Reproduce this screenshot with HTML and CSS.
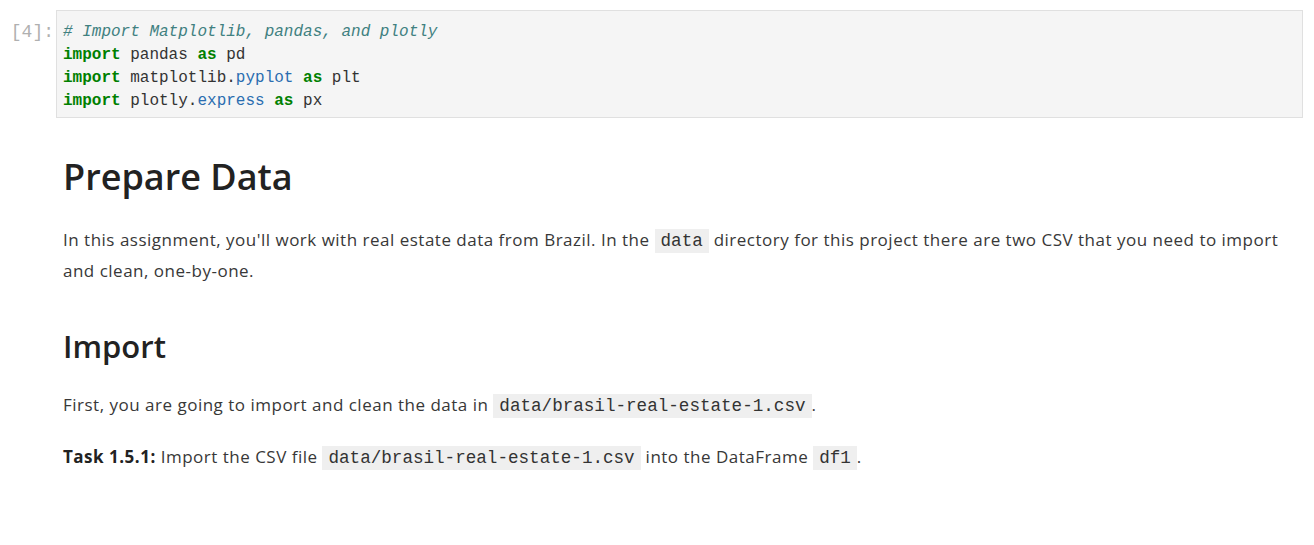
FILE: index.html
```html
<!DOCTYPE html>
<html>
<head>
<meta charset="utf-8">
<link rel="stylesheet" href="styles.css">
</head>
<body>
<div class="notebook">
  <div class="cell code-cell">
    <div class="prompt">[4]:</div>
    <div class="input">
<pre class="code"><span class="cm"># Import Matplotlib, pandas, and plotly</span>
<span class="kw">import</span> pandas <span class="kw">as</span> pd
<span class="kw">import</span> matplotlib.<span class="prop">pyplot</span> <span class="kw">as</span> plt
<span class="kw">import</span> plotly.<span class="prop">express</span> <span class="kw">as</span> px</pre>
    </div>
  </div>
  <div class="cell md-cell">
    <div class="prompt"></div>
    <div class="md">
      <h1>Prepare Data</h1>
      <p class="intro">In this assignment, you'll work with real estate data from Brazil. In the <code>data</code> directory for this project there are two CSV that you need to import and clean, one-by-one.</p>
      <h2>Import</h2>
      <p>First, you are going to import and clean the data in <code>data/brasil-real-estate-1.csv</code>.</p>
      <p><strong>Task 1.5.1:</strong> Import the CSV file <code>data/brasil-real-estate-1.csv</code> into the DataFrame <code>df1</code>.</p>
    </div>
  </div>
</div>
</body>
</html>
```
FILE: styles.css
```css
html, body {
  margin: 0;
  padding: 0;
  background: #ffffff;
}
.notebook {
  padding: 10px 11px 0 0;
}
.cell {
  display: flex;
}
.prompt {
  width: 56px;
  flex: none;
  box-sizing: border-box;
  padding-top: 11px;
  padding-right: 2px;
  text-align: right;
  font-family: "Liberation Mono", monospace;
  font-size: 18px;
  line-height: 23px;
  color: #b0b0b0;
}
.input {
  flex: 1;
  background: #f5f5f5;
  border: 1px solid #e0e0e0;
  box-sizing: border-box;
}
.code {
  margin: 0;
  padding: 10px 6px 4px 6px;
  font-family: "Liberation Mono", monospace;
  font-size: 16px;
  line-height: 23px;
  color: #333;
}
.cm { color: #408080; font-style: italic; }
.kw { color: #008000; font-weight: bold; }
.prop { color: #2a6db0; }
.md {
  flex: 1;
  padding: 0 10px 0 7px;
  font-family: "Open Sans", sans-serif;
  font-size: 17px;
  letter-spacing: 0.5px;
  color: #383838;
}
h1 {
  margin: 34px 0 0;
  font-size: 36px;
  font-weight: 600;
  letter-spacing: 0;
  line-height: 50px;
  color: #222;
}
h2 {
  margin: 40px 0 0;
  font-size: 31px;
  font-weight: 600;
  letter-spacing: 0;
  line-height: 40px;
  color: #222;
}
p {
  margin: 21px 0 0;
  line-height: 30px;
}
h1 + p { margin-top: 23px; }
h2 + p { margin-top: 24px; }
code {
  font-family: "Liberation Mono", monospace;
  font-size: 17.6px;
  letter-spacing: 0;
  background: #efefef;
  color: #333;
  padding: 2px 6px;
}
strong { font-weight: 700; color: #222; }
```
